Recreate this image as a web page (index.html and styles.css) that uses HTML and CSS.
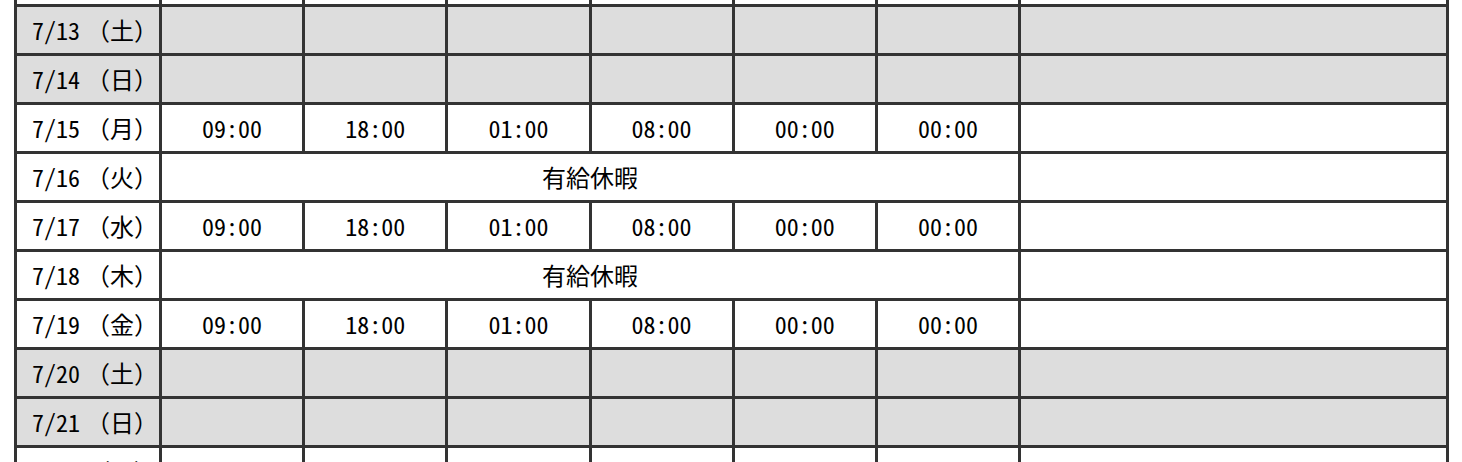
FILE: index.html
```html
<!DOCTYPE html>
<html lang="ja">
<head>
<meta charset="utf-8">
<title>勤務表</title>
<link rel="stylesheet" href="styles.css">
</head>
<body>
<div class="sheet">
  <div class="cell date"></div><div class="cell"></div><div class="cell"></div><div class="cell"></div><div class="cell"></div><div class="cell"></div><div class="cell"></div><div class="cell"></div>

  <div class="cell date off">7/13<span class="wd">（土）</span></div><div class="cell off"></div><div class="cell off"></div><div class="cell off"></div><div class="cell off"></div><div class="cell off"></div><div class="cell off"></div><div class="cell off"></div>

  <div class="cell date off">7/14<span class="wd">（日）</span></div><div class="cell off"></div><div class="cell off"></div><div class="cell off"></div><div class="cell off"></div><div class="cell off"></div><div class="cell off"></div><div class="cell off"></div>

  <div class="cell date">7/15<span class="wd">（月）</span></div><div class="cell">09:00</div><div class="cell">18:00</div><div class="cell">01:00</div><div class="cell">08:00</div><div class="cell">00:00</div><div class="cell">00:00</div><div class="cell"></div>

  <div class="cell date">7/16<span class="wd">（火）</span></div><div class="cell leave">有給休暇</div><div class="cell"></div>

  <div class="cell date">7/17<span class="wd">（水）</span></div><div class="cell">09:00</div><div class="cell">18:00</div><div class="cell">01:00</div><div class="cell">08:00</div><div class="cell">00:00</div><div class="cell">00:00</div><div class="cell"></div>

  <div class="cell date">7/18<span class="wd">（木）</span></div><div class="cell leave">有給休暇</div><div class="cell"></div>

  <div class="cell date">7/19<span class="wd">（金）</span></div><div class="cell">09:00</div><div class="cell">18:00</div><div class="cell">01:00</div><div class="cell">08:00</div><div class="cell">00:00</div><div class="cell">00:00</div><div class="cell"></div>

  <div class="cell date off">7/20<span class="wd">（土）</span></div><div class="cell off"></div><div class="cell off"></div><div class="cell off"></div><div class="cell off"></div><div class="cell off"></div><div class="cell off"></div><div class="cell off"></div>

  <div class="cell date off">7/21<span class="wd">（日）</span></div><div class="cell off"></div><div class="cell off"></div><div class="cell off"></div><div class="cell off"></div><div class="cell off"></div><div class="cell off"></div><div class="cell off"></div>

  <div class="cell date">7/22<span class="wd">（月）</span></div><div class="cell">09:00</div><div class="cell">18:00</div><div class="cell">01:00</div><div class="cell">08:00</div><div class="cell">00:00</div><div class="cell">00:00</div><div class="cell"></div>
</div>
</body>
</html>
```

FILE: styles.css
```css
html, body {
  margin: 0;
  padding: 0;
  background: #fff;
  overflow: hidden;
}

body {
  height: 462px;
}

.sheet {
  display: grid;
  grid-template-columns: 145px repeat(6, 1fr) 428px;
  grid-auto-rows: 49px;
  width: 1435px;
  box-sizing: border-box;
  margin: -45px 0 0 14px;
  border-left: 3px solid #333;
  border-top: 3px solid #333;
  font-family: "Noto Sans Mono CJK JP", "Noto Sans CJK JP", monospace;
  font-size: 24px;
  font-variant-numeric: slashed-zero;
  font-feature-settings: "zero" 1;
  color: #000;
}

.cell {
  box-sizing: border-box;
  border-right: 3px solid #333;
  border-bottom: 3px solid #333;
  padding-bottom: 2px;
  display: flex;
  align-items: center;
  justify-content: center;
  white-space: nowrap;
  background: #fff;
}

.date {
  justify-content: flex-start;
  padding-left: 15px;
}

.wd {
  margin-left: 6px;
}

.off {
  background: #ddd;
}

.leave {
  grid-column: span 6;
}
```
